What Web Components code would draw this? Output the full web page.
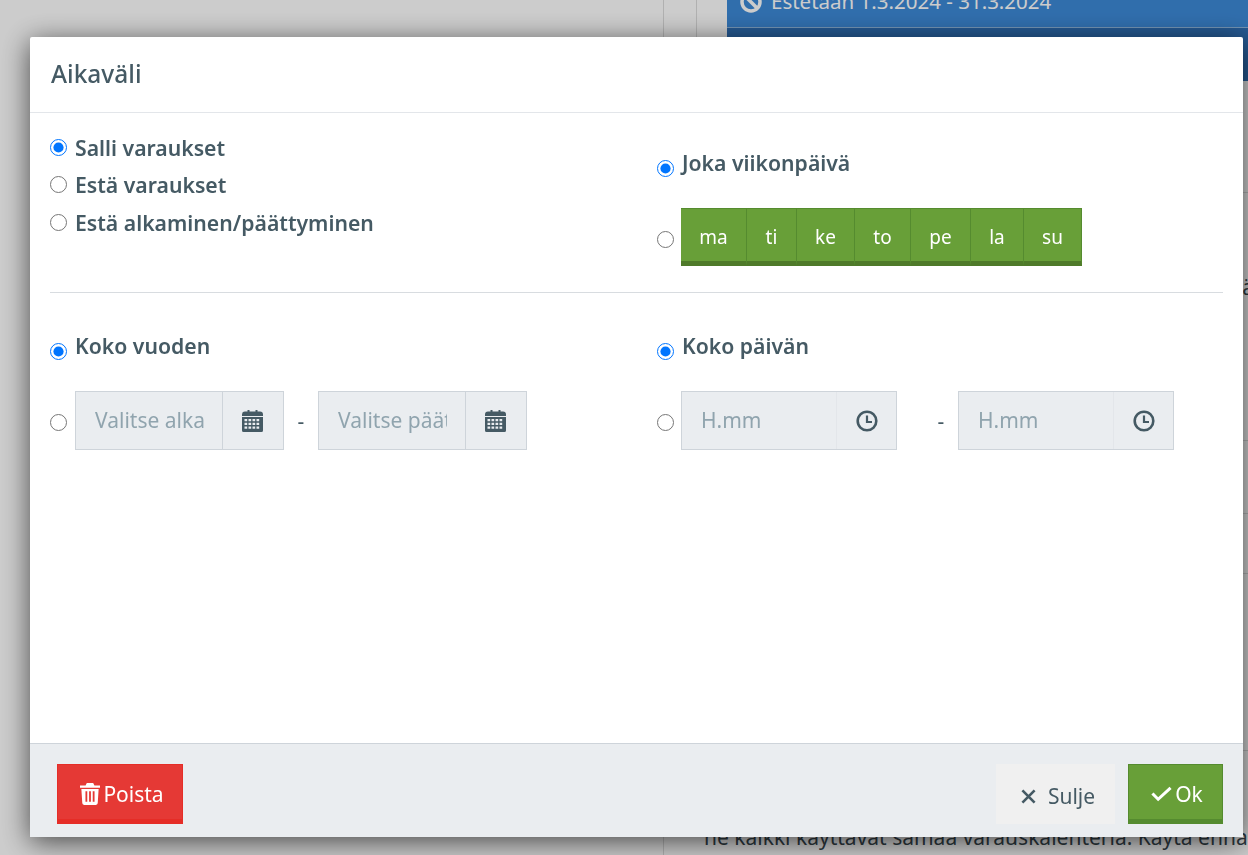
<!DOCTYPE html>
<html>
<head>
<meta charset="utf-8">
<title>Aikaväli</title>
<style>
  html, body { margin: 0; height: 100%; }
  body { font-family: "Noto Sans", sans-serif; color: #455a64; overflow: hidden; }
</style>
</head>
<body>
<page-behind></page-behind>
<modal-dialog title-text="Aikaväli">
  <range-form></range-form>
  <modal-button slot="left" kind="danger" icon="trash">Poista</modal-button>
  <modal-button slot="right" kind="plain" icon="times">Sulje</modal-button>
  <modal-button slot="right" kind="primary" icon="check">Ok</modal-button>
</modal-dialog>

<script>
const ICONS = {
  trash: `<svg viewBox="0 0 22 24" width="20" height="22"><path fill="currentColor" d="M7.5 0h7l1.4 2.6H22v2.6H0V2.6h6.100zM1.500 6.500h19l-1 15.500a2 2 0 0 1-2 2H4.500a2 2 0 0 1-2-2zM6 9v11.500h2V9zM10 9v11.500h2V9zM14 9v11.500h2V9z" fill-rule="evenodd"/></svg>`,
  times: `<svg viewBox="0 0 16 16" width="15" height="15"><path stroke="currentColor" stroke-width="2.800" d="M1.500 1.500l13 13M14.500 1.500l-13 13"/></svg>`,
  check: `<svg viewBox="0 0 22 16" width="21" height="16"><path fill="none" stroke="currentColor" stroke-width="3.200" d="M1.500 7.500l6 6L20.500 1.500"/></svg>`,
  calendar: `<svg viewBox="0 0 21 22" width="21" height="22"><path fill="currentColor" fill-rule="evenodd" d="M3 1.500h2.500V0h2v1.500h6V0h2v1.500H18a3 3 0 0 1 3 3V6H0V4.500a3 3 0 0 1 3-3zM0 7h21v13.500a1.500 1.500 0 0 1-1.500 1.500h-18A1.500 1.500 0 0 1 0 20.500zM2.500 9v2.200h2.700V9zM6.500 9v2.200h2.700V9zM10.500 9v2.200h2.700V9zM14.500 9v2.200h2.700V9zM2.500 12.700v2.300h2.700v-2.300zM6.500 12.700v2.300h2.700v-2.300zM10.500 12.700v2.300h2.700v-2.300zM14.500 12.700v2.300h2.700v-2.300zM2.500 16.500v2.300h2.700v-2.300zM6.500 16.500v2.300h2.700v-2.300zM10.500 16.500v2.300h2.700v-2.300zM14.500 16.500v2.300h2.700v-2.300z"/></svg>`,
  clock: `<svg viewBox="0 0 22 22" width="22" height="22"><circle cx="11" cy="11" r="9.300" fill="none" stroke="currentColor" stroke-width="2.600"/><path fill="none" stroke="currentColor" stroke-width="2.200" d="M11 5.500V12H16"/></svg>`,
  ban: `<svg viewBox="0 0 22 22" width="22" height="22"><circle cx="11" cy="11" r="9" fill="none" stroke="currentColor" stroke-width="3.500"/><path stroke="currentColor" stroke-width="3.500" d="M4.500 4.500l13 13"/></svg>`
};

// what shows of the page under the dimmed backdrop
class PageBehind extends HTMLElement {
  constructor() {
    super();
    const rows = [112, 248, 73, 60, 177];
    this.attachShadow({ mode: "open" }).innerHTML = `
      <style>
        :host { display: grid; grid-template-columns: 664px 33px 1fr; height: 855px; background: #fff; color: #37474f; font-size: 21px; overflow: hidden; }
        .col { border-right: 1px solid #ddd; }
        .short { height: 600px; }
        .side { display: flex; flex-direction: column; min-width: 0; overflow: hidden; }
        .blue { margin-left: 30px; background: #3d8ad8; color: #fff; height: 27px; display: flex; gap: 9px; padding-left: 13px; border-bottom: 1px solid #8fb8e0; white-space: nowrap; font-size: 20.5px; }
        .blue svg { flex: none; margin-top: -9px; }
        .blue span { margin-top: -13px; }
        .blue2 { margin-left: 30px; background: #2f6fb5; height: 53px; }
        .row { border-bottom: 1px solid #ddd; display: flex; justify-content: flex-end; }
        .row span { margin-right: -6px; margin-top: 80px; }
        .txt { margin-top: auto; margin-bottom: 4px; padding-left: 7px; white-space: nowrap; }
      </style>
      <div class="col"></div>
      <div class="col short"></div>
      <div class="side">
        <div class="blue">${ICONS.ban}<span>Estetään 1.3.2024 - 31.3.2024</span></div>
        <div class="blue2"></div>
        ${rows.map((h, i) => `<div class="row" style="height:${h - 1}px">${i === 1 ? "<span>ä</span>" : ""}</div>`).join("")}
        <div class="txt">ne kaikki käyttävät samaa varauskalenteria. Käytä enna</div>
      </div>`;
  }
}

class ModalDialog extends HTMLElement {
  constructor() {
    super();
    this.attachShadow({ mode: "open" }).innerHTML = `
      <style>
        :host { display: block; position: fixed; inset: 0; background: rgba(0,0,0,.2); padding: 37px 5px 18px 30px; box-sizing: border-box; }
        .box { height: 800px; background: #fff; display: flex; flex-direction: column; box-shadow: 0 5px 28px rgba(0,0,0,.65); border-radius: 2px; }
        header { height: 76px; box-sizing: border-box; padding: 0 21px 2px; display: flex; align-items: center; border-bottom: 1px solid #e3e6ea; font-size: 24.500px; font-weight: 500; }
        main { flex: 1; padding: 0 20px; }
        footer { height: 94px; box-sizing: border-box; border-top: 1px solid #ced4da; background: #eaedf0; padding: 20px 20px 0 27px; display: flex; justify-content: space-between; }
        .right { display: flex; gap: 13px; }
      </style>
      <div class="box">
        <header></header>
        <main><slot></slot></main>
        <footer><div><slot name="left"></slot></div><div class="right"><slot name="right"></slot></div></footer>
      </div>`;
  }
  connectedCallback() {
    this.shadowRoot.querySelector("header").textContent = this.getAttribute("title-text");
  }
}

class ModalButton extends HTMLElement {
  constructor() {
    super();
    this.attachShadow({ mode: "open" }).innerHTML = `
      <style>
        :host { display: block; font-size: 21px; }
        .btn { height: 60px; box-sizing: border-box; display: flex; align-items: center; justify-content: center; gap: 3px; padding: 4px 0 0 4px; }
        :host([kind=danger]) .btn { width: 126px; background: #e53935; color: #fff; border: 1px solid #e52d27; border-bottom-width: 5px; }
        :host([kind=primary]) .btn { width: 95px; background: #689f38; color: #fff; border: 1px solid #558b2f; border-bottom-width: 5px; padding-left: 3px; }
        :host([kind=plain]) .btn { width: 119px; background: #f0f0f0; gap: 12px; padding-left: 5px; }
        .ic { display: flex; }
      </style>
      <div class="btn"><span class="ic"></span><slot></slot></div>`;
  }
  connectedCallback() {
    this.shadowRoot.querySelector(".ic").innerHTML = ICONS[this.getAttribute("icon")];
  }
}

class RadioLine extends HTMLElement {
  constructor() {
    super();
    this.attachShadow({ mode: "open" }).innerHTML = `
      <style>
        :host { display: flex; align-items: center; height: 30px; font-size: 21.2px; font-weight: 600; }
        input { margin: 0 8px 0 0; width: 17px; height: 17px; flex: none; }
      </style>
      <input type="radio"><slot></slot>`;
  }
  connectedCallback() {
    const r = this.shadowRoot.querySelector("input");
    r.name = this.getAttribute("group") || "";
    r.checked = this.hasAttribute("checked");
    const dy = this.getAttribute("radio-dy");
    if (dy) r.style.transform = `translateY(${dy}px)`;
  }
}

class WeekDays extends HTMLElement {
  constructor() {
    super();
    const days = [["ma", 66], ["ti", 50], ["ke", 58], ["to", 56], ["pe", 60], ["la", 53], ["su", 58]];
    this.attachShadow({ mode: "open" }).innerHTML = `
      <style>
        :host { display: flex; font-size: 19px; color: #fff; }
        div { height: 58px; box-sizing: border-box; padding-top: 4px; background: #689f38; border: 1px solid #558b2f; border-bottom: 5px solid #4f7a2a; border-left-width: 0; display: flex; align-items: center; justify-content: center; }
        div:first-child { border-left-width: 1px; padding-left: 2px; }
      </style>
      ${days.map(([d, w]) => `<div style="width:${w}px">${d}</div>`).join("")}`;
  }
}

class AddonInput extends HTMLElement {
  constructor() {
    super();
    this.attachShadow({ mode: "open" }).innerHTML = `
      <style>
        :host { display: flex; height: 59px; box-sizing: border-box; background: #eaedf0; border: 1px solid #ced4da; font-size: 21px; color: #90a4ae; font-weight: 400; }
        .val { flex: 1; min-width: 0; margin: 0 18px 0 19px; overflow: hidden; white-space: nowrap; line-height: 57px; }
        .add { flex: none; box-sizing: border-box; display: flex; align-items: center; justify-content: center; color: #455a64; }
      </style>
      <div class="val"><slot></slot></div><div class="add"></div>`;
  }
  connectedCallback() {
    const add = this.shadowRoot.querySelector(".add");
    const time = this.getAttribute("icon") === "clock";
    add.innerHTML = ICONS[this.getAttribute("icon")];
    add.style.width = time ? "60px" : "61px";
    add.style.paddingRight = time ? "0" : "2px";
    add.style.borderLeft = `1px solid ${time ? "#e3e6ea" : "#ced4da"}`;
    this.style.width = time ? "216px" : "209px";
  }
}

class RangeForm extends HTMLElement {
  constructor() {
    super();
    this.attachShadow({ mode: "open" }).innerHTML = `
      <style>
        :host { display: block; color: #455a64; }
        .row { display: grid; grid-template-columns: 607px 1fr; }
        .top { height: 180px; border-bottom: 1px solid #d8dce0; box-sizing: border-box; }
        .left-top { padding-top: 19px; display: flex; flex-direction: column; gap: 7.500px; }
        .right-top { padding-top: 34px; }
        .stack { display: flex; flex-direction: column; }
        .bottom { padding-top: 37px; }
        .inline { display: flex; align-items: center; margin-top: 31px; font-size: 21px; }
        .radio { margin: 0 8px 0 0; width: 17px; height: 17px; flex: none; transform: translateY(2px); }
        .right .radio, .right-top .radio { margin-right: 7px; }
        .dash { flex: none; text-align: center; box-sizing: border-box; }
      </style>
      <div class="row top">
        <div class="left-top">
          <radio-line group="mode" checked>Salli varaukset</radio-line>
          <radio-line group="mode">Estä varaukset</radio-line>
          <radio-line group="mode">Estä alkaminen/päättyminen</radio-line>
        </div>
        <div class="right-top stack">
          <radio-line group="days" checked radio-dy="6">Joka viikonpäivä</radio-line>
          <div class="inline"><input class="radio" type="radio" name="days"><week-days></week-days></div>
        </div>
      </div>
      <div class="row bottom">
        <div class="stack">
          <radio-line group="year" checked radio-dy="6">Koko vuoden</radio-line>
          <div class="inline">
            <input class="radio" type="radio" name="year">
            <addon-input icon="calendar">Valitse alkamispäivä</addon-input>
            <span class="dash" style="width:34px">-</span>
            <addon-input icon="calendar">Valitse päättymispäivä</addon-input>
          </div>
        </div>
        <div class="stack right">
          <radio-line group="hours" checked radio-dy="6">Koko päivän</radio-line>
          <div class="inline">
            <input class="radio" type="radio" name="hours">
            <addon-input icon="clock">H.mm</addon-input>
            <span class="dash" style="width:61px;padding-left:27px">-</span>
            <addon-input icon="clock">H.mm</addon-input>
          </div>
        </div>
      </div>`;
  }
}

customElements.define("page-behind", PageBehind);
customElements.define("modal-dialog", ModalDialog);
customElements.define("modal-button", ModalButton);
customElements.define("radio-line", RadioLine);
customElements.define("week-days", WeekDays);
customElements.define("addon-input", AddonInput);
customElements.define("range-form", RangeForm);
</script>
</body>
</html>
